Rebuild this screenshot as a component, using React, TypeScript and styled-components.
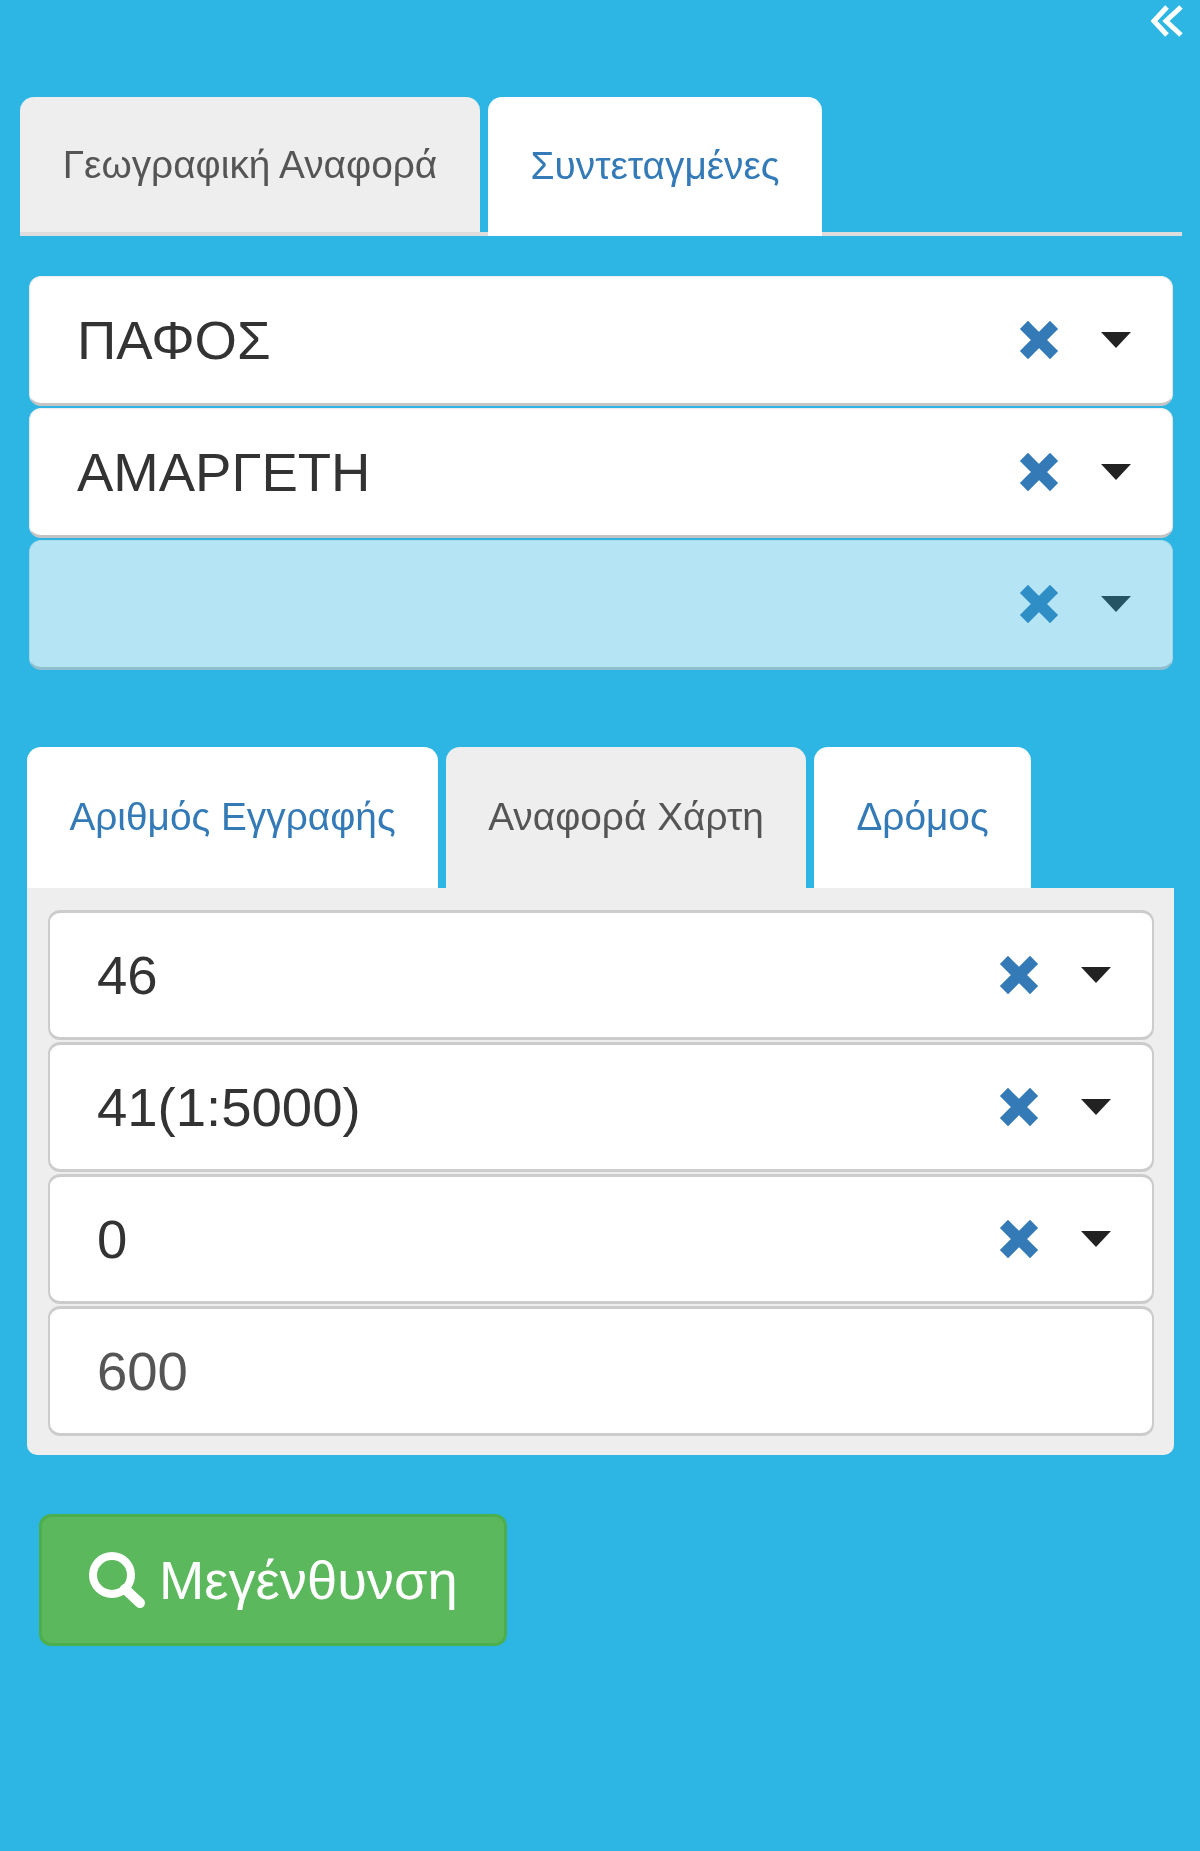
import React from "react";
import styled, { createGlobalStyle } from "styled-components";

const Global = createGlobalStyle`
  html, body { margin: 0; padding: 0; background: #2db6e4; }
  * { box-sizing: border-box; }
`;

const Page = styled.div`
  width: 1200px;
  height: 1851px;
  background: #2db6e4;
  font-family: "Liberation Sans", Arial, sans-serif;
  color: #333;
  overflow: hidden;
  filter: blur(0.6px);
`;

const TopBar = styled.div`
  height: 97px;
  display: flex;
  justify-content: flex-end;
  align-items: flex-start;
  padding: 5px 17px 0 0;
`;

const TabStrip = styled.div`
  display: flex;
  gap: 8px;
  margin: 0 18px 0 20px;
  border-bottom: 4px solid #ddd;
  height: 139px;
`;

const PanelTabs = styled.div`
  display: flex;
  gap: 8px;
  margin: 77px 27px 0;
  height: 141px;
`;

const Tab = styled.div<{ $active?: boolean; $width: number; $strip?: boolean }>`
  width: ${(p) => p.$width}px;
  height: ${(p) => (p.$strip && !p.$active ? 135 : p.$strip ? 139 : 141)}px;
  border-radius: 14px 14px 0 0;
  background: ${(p) => (p.$active ? "#fff" : "#eee")};
  color: ${(p) => (p.$active ? "#337ab7" : "#555")};
  font-size: 38.8px;
  display: flex;
  align-items: center;
  justify-content: center;
  padding-bottom: ${(p) => (p.$strip && !p.$active ? 0 : 2)}px;
  white-space: nowrap;
`;

const SelectStack = styled.div`
  margin: 40px 27px 0 29px;
  display: flex;
  flex-direction: column;
  gap: 2px;
`;

const Panel = styled.div`
  margin: 0 26px 0 27px;
  height: 567px;
  background: #eee;
  border-radius: 0 0 10px 10px;
  padding: 22px 20px 0 21px;
  display: flex;
  flex-direction: column;
  gap: 2px;
`;

const Field = styled.div<{ $faded?: boolean; $muted?: boolean }>`
  height: 130px;
  flex: none;
  background: #fff;
  border: 2px solid #ccc;
  border-bottom-width: 3px;
  border-top-width: 3px;
  border-radius: 12px;
  display: flex;
  align-items: center;
  padding: 0 41px 0 47px;
  font-size: 54.5px;
  color: ${(p) => (p.$muted ? "#555" : "#333")};
  opacity: ${(p) => (p.$faded ? 0.65 : 1)};
`;

const OuterField = styled(Field)`
  border-color: #f2ecea #e6e6e6 #c4c4c4;
  border-top-width: 1px;
  border-left-width: 1px;
  border-right-width: 1px;
`;

const FieldValue = styled.span`
  flex: 1;
`;

const Clear = styled.svg`
  width: 40px;
  height: 40px;
  flex: none;
  margin-right: 42px;
`;

const Caret = styled.svg`
  width: 30px;
  height: 16px;
  flex: none;
`;

const SearchButton = styled.div`
  margin: 59px 0 0 39px;
  width: 468px;
  height: 132px;
  background: #5cb85c;
  border: 3px solid #4cae4c;
  border-radius: 12px;
  color: #fff;
  font-size: 54.3px;
  display: flex;
  align-items: center;
  padding-left: 46px;
  gap: 14px;
`;

const Controls = () => (
  <>
    <Clear viewBox="0 0 40 40">
      <path d="M9 9 L31 31 M31 9 L9 31" stroke="#337ab7" strokeWidth="11.5" strokeLinecap="square" fill="none" />
    </Clear>
    <Caret viewBox="0 0 30 16">
      <path d="M0 0 H30 L15 16 Z" fill="#222" />
    </Caret>
  </>
);

const Select = ({ value }: { value: string }) => (
  <Field>
    <FieldValue>{value}</FieldValue>
    <Controls />
  </Field>
);

const OuterSelect = ({ value, faded }: { value?: string; faded?: boolean }) => (
  <OuterField $faded={faded}>
    <FieldValue>{value}</FieldValue>
    <Controls />
  </OuterField>
);

export default function App() {
  return (
    <Page>
      <Global />
      <TopBar>
        <svg width="32" height="32" viewBox="0 0 32 32" fill="none" stroke="#fff" strokeWidth="5">
          <path d="M16 2 L3 16 L16 30" />
          <path d="M30 2 L15 16 L30 30" />
        </svg>
      </TopBar>
      <TabStrip>
        <Tab $strip $width={460}>Γεωγραφική Αναφορά</Tab>
        <Tab $strip $active $width={334}>Συντεταγμένες</Tab>
      </TabStrip>
      <SelectStack>
        <OuterSelect value="ΠΑΦΟΣ" />
        <OuterSelect value="ΑΜΑΡΓΕΤΗ" />
        <OuterSelect faded />
      </SelectStack>
      <PanelTabs>
        <Tab $active $width={411}>Αριθμός Εγγραφής</Tab>
        <Tab $width={360}>Αναφορά Χάρτη</Tab>
        <Tab $active $width={217}>Δρόμος</Tab>
      </PanelTabs>
      <Panel>
        <Select value="46" />
        <Select value="41(1:5000)" />
        <Select value="0" />
        <Field $muted>600</Field>
      </Panel>
      <SearchButton>
        <svg width="57" height="56" viewBox="0 0 57 56" fill="none" stroke="#fff">
          <circle cx="24" cy="23" r="19" strokeWidth="8" />
          <path d="M37 37 L52 51" strokeWidth="10" strokeLinecap="round" />
        </svg>
        Μεγένθυνση
      </SearchButton>
    </Page>
  );
}
